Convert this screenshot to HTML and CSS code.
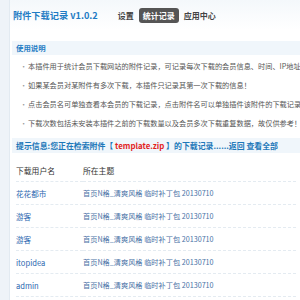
FILE: index.html
```html
<!DOCTYPE html>
<html lang="zh-CN">
<head>
    <meta charset="UTF-8">
    <title>附件下载记录</title>
    <link rel="stylesheet" href="styles.css">
</head>
<body>
    <div class="page">
        <div class="side"></div>
        <div class="main">
            <div class="topbar">
                <h3 class="title">附件下载记录 v1.0.2</h3>
                <a class="tab">设置</a>
                <a class="tab current">统计记录</a>
                <a class="tab">应用中心</a>
            </div>

            <div class="band">使用说明</div>
            <ul class="tips">
                <li>本插件用于统计会员下载网站的附件记录，可记录每次下载的会员信息、时间、IP地址等信息</li>
                <li>如果某会员对某附件有多次下载，本插件只记录其第一次下载的信息！</li>
                <li>点击会员名可单独查看本会员的下载记录，点击附件名可以单独插件该附件的下载记录</li>
                <li>下载次数包括未安装本插件之前的下载数量以及会员多次下载重复数据，故仅供参考！</li>
            </ul>

            <div class="band notice">提示信息:您正在检索附件【 <span class="file">template.zip</span> 】的下载记录......返回 查看全部</div>

            <table class="list">
                <tr class="head">
                    <td class="user">下载用户名</td>
                    <td>所在主题</td>
                </tr>
                <tr>
                    <td class="user"><a>花花都市</a></td>
                    <td><a class="topic">首页N格_清爽风格 临时补丁包 20130710</a></td>
                </tr>
                <tr>
                    <td class="user"><a>游客</a></td>
                    <td><a class="topic">首页N格_清爽风格 临时补丁包 20130710</a></td>
                </tr>
                <tr>
                    <td class="user"><a>游客</a></td>
                    <td><a class="topic">首页N格_清爽风格 临时补丁包 20130710</a></td>
                </tr>
                <tr>
                    <td class="user"><a>itopidea</a></td>
                    <td><a class="topic">首页N格_清爽风格 临时补丁包 20130710</a></td>
                </tr>
                <tr>
                    <td class="user"><a>admin</a></td>
                    <td><a class="topic">首页N格_清爽风格 临时补丁包 20130710</a></td>
                </tr>
            </table>
        </div>
    </div>
</body>
</html>
```

FILE: styles.css
```css
body {
    margin: 0;
    background: #ffffff;
    font-family: "Noto Sans CJK SC", "DejaVu Sans", sans-serif;
    font-size: 7.2px;
    color: #444;
}
.page {
    display: flex;
    height: 300px;
    overflow: hidden;
}
.side {
    width: 9px;
    background: #eef3f8;
    border-right: 1px solid #e2eaf1;
    flex-shrink: 0;
}
.main {
    flex: 1;
    min-width: 0;
    overflow: hidden;
}
.topbar {
    display: flex;
    align-items: center;
    height: 30px;
    padding-left: 3px;
    background: linear-gradient(#f4f8fb, #ffffff);
}
.title {
    margin: 0 16px 0 0;
    font-size: 9.2px;
    font-weight: bold;
    color: #1f7cc4;
}
.tab {
    font-size: 8px;
    font-weight: bold;
    color: #444;
    padding: 2px 4px;
    margin-right: 1px;
    border-radius: 3px;
}
.tab.current {
    background: #555;
    color: #fff;
}
.band {
    margin: 11px 0 0 2px;
    height: 14px;
    line-height: 14px;
    padding-left: 4px;
    background: #f0f6fb;
    font-weight: bold;
    color: #1f7cc4;
    font-size: 7.4px;
}
.tips {
    list-style: none;
    margin: 2px 0 0;
    padding: 0 0 0 10px;
}
.tips li {
    height: 19px;
    line-height: 19px;
    white-space: nowrap;
    color: #555;
}
.tips li::before {
    content: "•";
    color: #999;
    display: inline-block;
    width: 8px;
}
.notice {
    margin-top: 5px;
    height: 15px;
    line-height: 15px;
    font-size: 7.9px;
    color: #1d78b9;
    white-space: nowrap;
}
.file {
    color: #e21f1f;
}
.list {
    margin: 6px 0 0 6px;
    border-collapse: collapse;
    width: 280px;
}
.list td {
    height: 22px;
    padding: 0;
    white-space: nowrap;
    border-bottom: 1px dashed #e4ebf1;
}
.list .head td {
    font-size: 7.8px;
    color: #333;
}
.list td.user {
    width: 67px;
}
.list a {
    color: #2c67b0;
    font-size: 7.6px;
}
.list a.topic {
    color: #4a72a6;
    font-size: 7.2px;
}
```
